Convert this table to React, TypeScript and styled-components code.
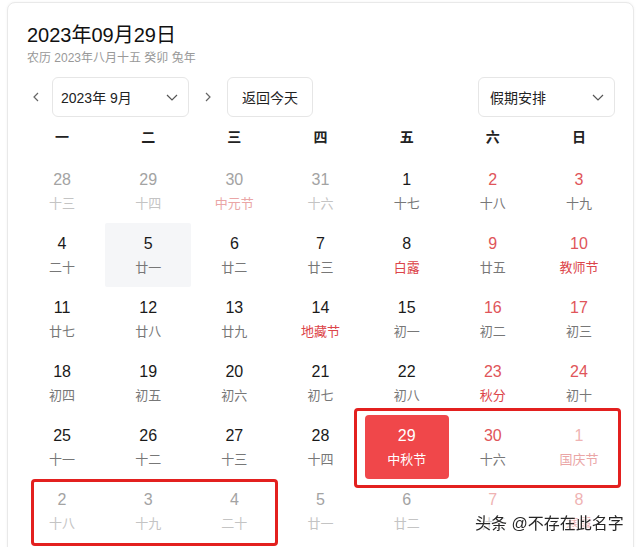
import { type ReactNode } from 'react'
import styled, { createGlobalStyle } from 'styled-components'

type Day = {
  day: number
  lunar: string
  out?: boolean
  weekend?: boolean
  fest?: boolean
  today?: boolean
  hover?: boolean
}

const WEEKDAYS = ['一', '二', '三', '四', '五', '六', '日']

const ROWS: Day[][] = [
  [
    { day: 28, lunar: '十三', out: true },
    { day: 29, lunar: '十四', out: true },
    { day: 30, lunar: '中元节', out: true, fest: true },
    { day: 31, lunar: '十六', out: true },
    { day: 1, lunar: '十七' },
    { day: 2, lunar: '十八', weekend: true },
    { day: 3, lunar: '十九', weekend: true },
  ],
  [
    { day: 4, lunar: '二十' },
    { day: 5, lunar: '廿一', hover: true },
    { day: 6, lunar: '廿二' },
    { day: 7, lunar: '廿三' },
    { day: 8, lunar: '白露', fest: true },
    { day: 9, lunar: '廿五', weekend: true },
    { day: 10, lunar: '教师节', weekend: true, fest: true },
  ],
  [
    { day: 11, lunar: '廿七' },
    { day: 12, lunar: '廿八' },
    { day: 13, lunar: '廿九' },
    { day: 14, lunar: '地藏节', fest: true },
    { day: 15, lunar: '初一' },
    { day: 16, lunar: '初二', weekend: true },
    { day: 17, lunar: '初三', weekend: true },
  ],
  [
    { day: 18, lunar: '初四' },
    { day: 19, lunar: '初五' },
    { day: 20, lunar: '初六' },
    { day: 21, lunar: '初七' },
    { day: 22, lunar: '初八' },
    { day: 23, lunar: '秋分', weekend: true, fest: true },
    { day: 24, lunar: '初十', weekend: true },
  ],
  [
    { day: 25, lunar: '十一' },
    { day: 26, lunar: '十二' },
    { day: 27, lunar: '十三' },
    { day: 28, lunar: '十四' },
    { day: 29, lunar: '中秋节', today: true },
    { day: 30, lunar: '十六', weekend: true },
    { day: 1, lunar: '国庆节', out: true, weekend: true, fest: true },
  ],
  [
    { day: 2, lunar: '十八', out: true },
    { day: 3, lunar: '十九', out: true },
    { day: 4, lunar: '二十', out: true },
    { day: 5, lunar: '廿一', out: true },
    { day: 6, lunar: '廿二', out: true },
    { day: 7, lunar: '廿三', out: true, weekend: true },
    { day: 8, lunar: '寒露', out: true, weekend: true, fest: true },
  ],
]

const numColor = (d: Day) => {
  if (d.today) return '#ffffff'
  if (d.out) return d.weekend ? '#efb3b3' : '#a3a3a3'
  return d.weekend ? '#e0555a' : '#1a1a1a'
}

const lunarColor = (d: Day) => {
  if (d.today) return '#ffffff'
  if (d.out) return d.fest ? '#eaa6a6' : '#c4c4c4'
  return d.fest ? '#dc4449' : '#777777'
}

const Chevron = ({ dir }: { dir: 'left' | 'right' | 'down' }): ReactNode => {
  if (dir === 'down') {
    return (
      <svg width="12" height="7" viewBox="0 0 12 7" fill="none">
        <path d="M1 1l5 5 5-5" stroke="#555" strokeWidth="1.2" />
      </svg>
    )
  }
  return (
    <svg width="6" height="10" viewBox="0 0 6 10" fill="none">
      <path
        d={dir === 'left' ? 'M5 1L1 5l4 4' : 'M1 1l4 4-4 4'}
        stroke="#666"
        strokeWidth="1.2"
      />
    </svg>
  )
}

const App = (): ReactNode => {
  return (
    <>
      <GlobalStyle />
      <Card>
        <Title>2023年09月29日</Title>
        <Subtitle>农历 2023年八月十五 癸卯 兔年</Subtitle>

        <Toolbar>
          <ArrowButton>
            <Chevron dir="left" />
          </ArrowButton>
          <Select $width={137}>
            <span>2023年 9月</span>
            <Chevron dir="down" />
          </Select>
          <ArrowButton $gapLeft={10}>
            <Chevron dir="right" />
          </ArrowButton>
          <TodayButton>返回今天</TodayButton>
          <Spacer />
          <Select $width={137} $padLeft={11}>
            <span>假期安排</span>
            <Chevron dir="down" />
          </Select>
        </Toolbar>

        <Grid>
          {WEEKDAYS.map((w) => (
            <WeekHead key={w}>{w}</WeekHead>
          ))}
          {ROWS.flat().map((d, i) => (
            <Cell key={i} $today={d.today} $hover={d.hover}>
              <DayNum $color={numColor(d)}>{d.day}</DayNum>
              <Lunar $color={lunarColor(d)}>{d.lunar}</Lunar>
            </Cell>
          ))}
          <Mark $left={335} $top={291} $width={267} $height={80} />
          <Mark $left={12} $top={362} $width={247} $height={67} />
        </Grid>
      </Card>
      <Watermark>头条 @不存在此名字</Watermark>
    </>
  )
}

export default App

const GlobalStyle = createGlobalStyle`
  html, body {
    margin: 0;
    padding: 0;
    height: 547px;
    background: #ffffff;
    overflow: hidden;
  }
  body {
    font-family: "Liberation Sans", "Noto Sans CJK SC", sans-serif;
    color: #1a1a1a;
  }
  * {
    box-sizing: border-box;
  }
`

const Card = styled.div`
  margin: 2px 0 0 7px;
  width: 627px;
  height: 560px;
  padding: 19px 18px 0 19px;
  border: 1px solid #e9e9e9;
  border-radius: 8px;
  box-shadow: 0 0 3px rgba(0, 0, 0, 0.05);
  background: #ffffff;
`

const Title = styled.div`
  font-size: 20px;
  line-height: 27px;
  color: #111;
`

const Subtitle = styled.div`
  font-size: 12px;
  line-height: 18px;
  color: #999;
`

const Toolbar = styled.div`
  display: flex;
  align-items: center;
  margin-top: 10px;
  height: 40px;
`

const ArrowButton = styled.button<{ $gapLeft?: number }>`
  display: flex;
  align-items: center;
  justify-content: center;
  width: 17px;
  height: 40px;
  padding: 0;
  margin: 0 8px 0 ${(p) => p.$gapLeft ?? 0}px;
  border: none;
  background: none;
  cursor: pointer;
`

const Select = styled.div<{ $width: number; $padLeft?: number }>`
  display: flex;
  align-items: center;
  justify-content: space-between;
  width: ${(p) => p.$width}px;
  height: 40px;
  padding: 0 10px 0 ${(p) => p.$padLeft ?? 8}px;
  border: 1px solid #e6e6e6;
  border-radius: 6px;
  font-size: 14px;
  color: #222;
  background: #fff;
`

const TodayButton = styled.button`
  height: 40px;
  width: 86px;
  margin-left: 3px;
  padding: 0;
  border: 1px solid #e6e6e6;
  border-radius: 6px;
  background: #fff;
  font-family: inherit;
  font-size: 14px;
  color: #222;
  cursor: pointer;
`

const Spacer = styled.div`
  flex: 1;
`

const Grid = styled.div`
  position: relative;
  display: grid;
  grid-template-columns: repeat(7, 1fr);
  grid-auto-rows: 64px;
  grid-template-rows: 42px;
  width: 603px;
  margin: 0 0 0 -8px;
`

const WeekHead = styled.div`
  display: flex;
  align-items: flex-start;
  justify-content: center;
  padding-top: 10px;
  font-size: 14px;
  line-height: 20px;
  font-weight: bold;
  color: #222;
`

const Cell = styled.div<{ $today?: boolean; $hover?: boolean }>`
  display: flex;
  flex-direction: column;
  align-items: center;
  justify-content: center;
  gap: 3px;
  border-radius: ${(p) => (p.$today ? 4 : 2)}px;
  margin: ${(p) => (p.$today ? '0 1px' : '0')};
  background: ${(p) => (p.$today ? '#f0474a' : p.$hover ? '#f5f6f8' : 'transparent')};
`

const DayNum = styled.span<{ $color: string }>`
  font-size: 16px;
  line-height: 22px;
  color: ${(p) => p.$color};
`

const Lunar = styled.span<{ $color: string }>`
  font-size: 13px;
  line-height: 20px;
  color: ${(p) => p.$color};
`

const Mark = styled.div<{ $left: number; $top: number; $width: number; $height: number }>`
  position: absolute;
  left: ${(p) => p.$left}px;
  top: ${(p) => p.$top}px;
  width: ${(p) => p.$width}px;
  height: ${(p) => p.$height}px;
  border: 3px solid #e3201f;
  border-radius: 4px;
  pointer-events: none;
`

const Watermark = styled.div`
  position: fixed;
  left: 475px;
  top: 513px;
  font-size: 16px;
  line-height: 22px;
  color: #262626;
  white-space: nowrap;
  text-shadow: 0 0 2px #fff, 0 0 2px #fff, 0 0 3px #fff;
`
